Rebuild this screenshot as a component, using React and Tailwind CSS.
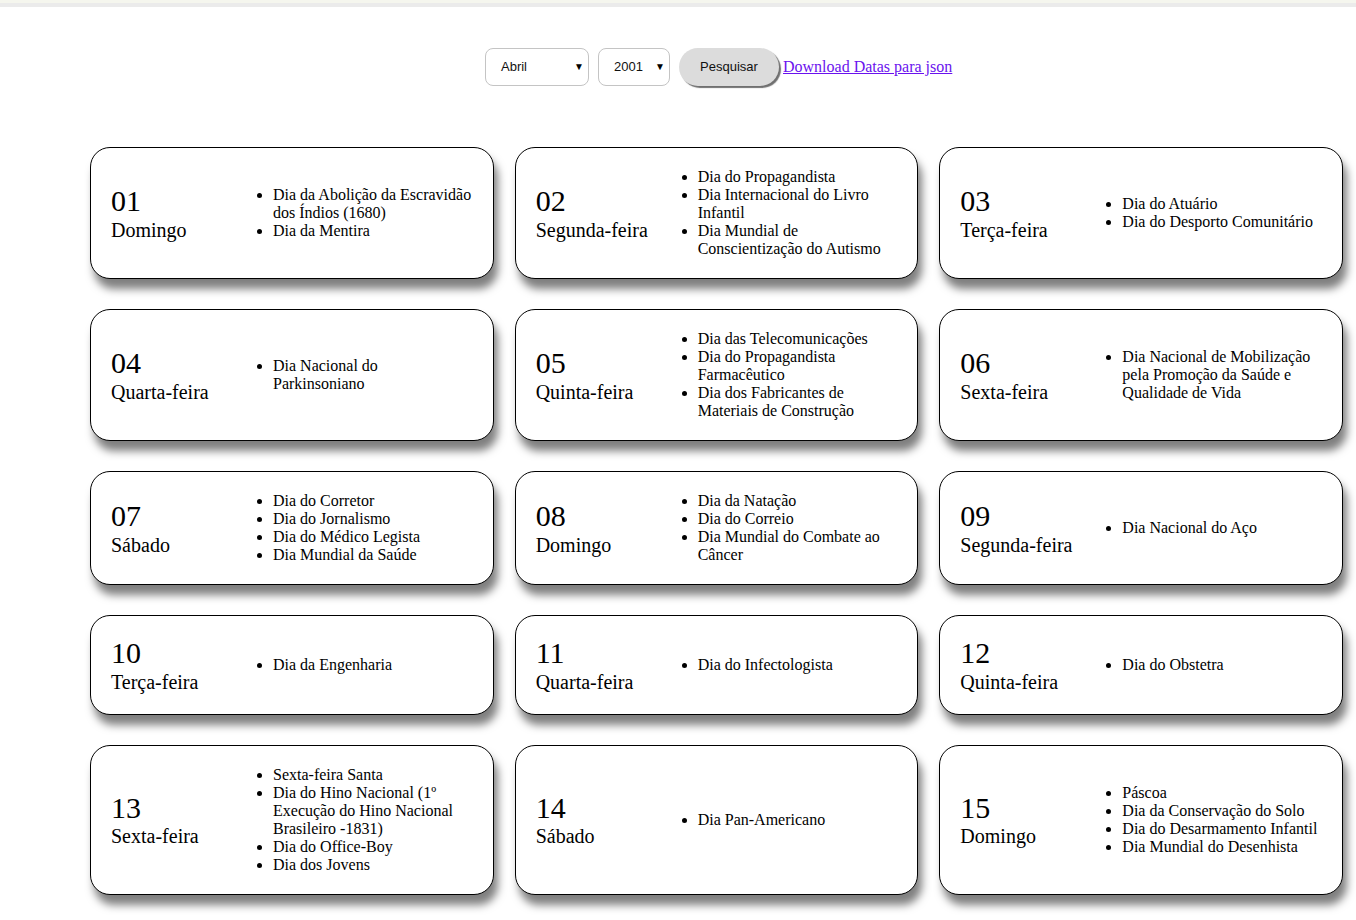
const days = [
  { n: '01', d: 'Domingo', items: ['Dia da Abolição da Escravidão dos Índios (1680)', 'Dia da Mentira'] },
  { n: '02', d: 'Segunda-feira', items: ['Dia do Propagandista', 'Dia Internacional do Livro Infantil', 'Dia Mundial de Conscientização do Autismo'] },
  { n: '03', d: 'Terça-feira', items: ['Dia do Atuário', 'Dia do Desporto Comunitário'] },
  { n: '04', d: 'Quarta-feira', items: ['Dia Nacional do Parkinsoniano'] },
  { n: '05', d: 'Quinta-feira', items: ['Dia das Telecomunicações', 'Dia do Propagandista Farmacêutico', 'Dia dos Fabricantes de Materiais de Construção'] },
  { n: '06', d: 'Sexta-feira', items: ['Dia Nacional de Mobilização pela Promoção da Saúde e Qualidade de Vida'] },
  { n: '07', d: 'Sábado', items: ['Dia do Corretor', 'Dia do Jornalismo', 'Dia do Médico Legista', 'Dia Mundial da Saúde'] },
  { n: '08', d: 'Domingo', items: ['Dia da Natação', 'Dia do Correio', 'Dia Mundial do Combate ao Câncer'] },
  { n: '09', d: 'Segunda-feira', items: ['Dia Nacional do Aço'] },
  { n: '10', d: 'Terça-feira', items: ['Dia da Engenharia'] },
  { n: '11', d: 'Quarta-feira', items: ['Dia do Infectologista'] },
  { n: '12', d: 'Quinta-feira', items: ['Dia do Obstetra'] },
  { n: '13', d: 'Sexta-feira', items: ['Sexta-feira Santa', 'Dia do Hino Nacional (1º Execução do Hino Nacional Brasileiro -1831)', 'Dia do Office-Boy', 'Dia dos Jovens'] },
  { n: '14', d: 'Sábado', items: ['Dia Pan-Americano'] },
  { n: '15', d: 'Domingo', items: ['Páscoa', 'Dia da Conservação do Solo', 'Dia do Desarmamento Infantil', 'Dia Mundial do Desenhista'] },
]

function FakeSelect({ value, width }) {
  return (
    <div className={`relative h-[38px] ${width} rounded-[8px] border border-[#c4c4c4] bg-white flex items-center pl-[15px] text-[13px] text-[#111]`}>
      <span>{value}</span>
      <span className="absolute right-[4px] top-[10px] text-[10px] text-black">▼</span>
    </div>
  )
}

function DayCard({ day }) {
  return (
    <div className="flex items-center rounded-[20px] border border-black bg-white px-5 py-5 shadow-[4px_10px_9px_rgba(0,0,0,0.5)]">
      <div className="w-[122px] shrink-0 text-black">
        <div className="text-[30px] leading-[34.5px]">{day.n}</div>
        <div className="text-[20px] leading-[23px]">{day.d}</div>
      </div>
      <ul className="flex-1 list-disc pl-10 text-[16px] leading-[18px] text-black">
        {day.items.map((it) => (
          <li key={it}>{it}</li>
        ))}
      </ul>
    </div>
  )
}

export default function App() {
  return (
    <div className="min-h-[920px] bg-white font-['Liberation_Serif',serif]">
      <div className="h-[3px] bg-[#f5f6ee]" />
      <div className="h-[4px] bg-[#ebebeb]" />

      <div className="ml-[90px] w-[1253px]">
        <div className="mt-[41px] flex items-center pl-[395px] font-['Liberation_Sans',sans-serif]">
          <FakeSelect value="Abril" width="w-[104px]" />
          <div className="ml-[9px]">
            <FakeSelect value="2001" width="w-[72px]" />
          </div>
          <button className="ml-[9px] h-[38px] w-[100px] rounded-[19px] bg-[#dcdcdc] text-[13px] text-[#111] shadow-[2px_2px_1px_#707070]">
            Pesquisar
          </button>
          <a href="#" className="ml-[4px] font-['Liberation_Serif',serif] text-[16px] text-[#6a12ee] underline">
            Download Datas para json
          </a>
        </div>

        <div className="mt-[61px] grid grid-cols-3 gap-x-[21px] gap-y-[30px]">
          {days.map((day) => (
            <DayCard key={day.n} day={day} />
          ))}
        </div>
      </div>
    </div>
  )
}
